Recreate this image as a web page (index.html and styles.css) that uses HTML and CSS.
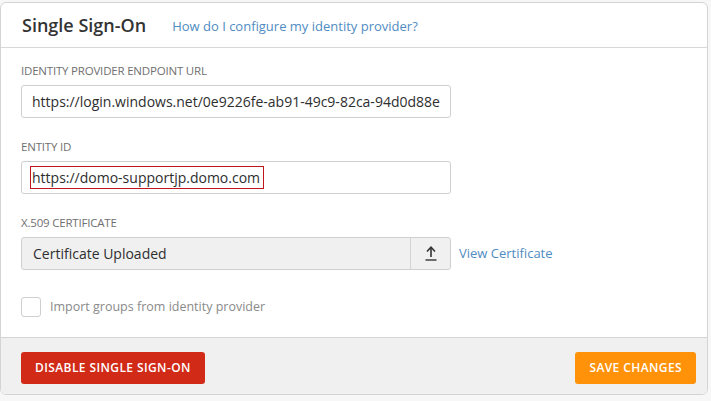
FILE: index.html
```html
<!DOCTYPE html>
<html lang="en">
	<head>
		<meta charset="UTF-8" />
		<meta name="viewport" content="width=device-width, initial-scale=1.0" />
		<title>Single Sign-On</title>
		<link rel="stylesheet" href="styles.css">
	</head>
	<body>
		<div class="card">
			<div class="card-header">
				<h2 class="title">Single Sign-On</h2>
				<a class="link help-link" href="#">How do I configure my identity provider?</a>
			</div>
			<div class="card-body">
				<div class="field">
					<label class="field-label">Identity Provider Endpoint URL</label>
					<div class="input">https://login.windows.net/0e9226fe-ab91-49c9-82ca-94d0d88e</div>
				</div>
				<div class="field">
					<label class="field-label">Entity ID</label>
					<div class="input"><span class="highlight">https://domo-supportjp.domo.com</span></div>
				</div>
				<div class="field">
					<label class="field-label">X.509 Certificate</label>
					<div class="cert-row">
						<div class="input input-file">
							<span class="file-name">Certificate Uploaded</span>
							<span class="upload-btn">
								<svg width="14" height="18" viewBox="0 0 14 18">
									<path d="M7 3.5 V13" stroke="#333" stroke-width="1.6" fill="none" />
									<path d="M3 7.5 L7 3.2 L11 7.5" stroke="#333" stroke-width="1.6" fill="none" />
									<path d="M1.5 16 H12.5" stroke="#333" stroke-width="1.4" fill="none" />
								</svg>
							</span>
						</div>
						<a class="link" href="#">View Certificate</a>
					</div>
				</div>
				<label class="check">
					<span class="check-box"></span>
					<span class="check-text">Import groups from identity provider</span>
				</label>
			</div>
			<div class="card-footer">
				<button class="btn btn-danger">Disable Single Sign-On</button>
				<button class="btn btn-warning">Save Changes</button>
			</div>
		</div>
	</body>
</html>
```

FILE: styles.css
```css
body {
	margin: 0;
	background: #f7f7f7;
	font-family: "Open Sans", "Liberation Sans", sans-serif;
	color: #333;
}
.card {
	margin-top: 2px;
	width: 706px;
	background: #fff;
	border: 1px solid #d4d4d4;
	border-radius: 6px;
	overflow: hidden;
}
.card-header {
	display: flex;
	align-items: center;
	gap: 26px;
	height: 44px;
	padding: 0 21px;
	border-bottom: 1px solid #d8d8d8;
}
.title {
	margin: 0;
	font-size: 18px;
	font-weight: 600;
	color: #333;
}
.link {
	color: #4f8cc2;
	text-decoration: none;
	font-size: 13px;
}
.help-link {
	margin-top: 1px;
}
.card-body {
	padding: 15px 20px 20px;
}
.field {
	margin-bottom: 21px;
}
.field-label {
	display: block;
	margin-bottom: 6px;
	font-size: 11.5px;
	line-height: 16px;
	letter-spacing: -0.2px;
	text-transform: uppercase;
	color: #707070;
}
.input {
	box-sizing: border-box;
	width: 430px;
	height: 33px;
	display: flex;
	align-items: center;
	padding: 0 10px;
	border: 1px solid #cfcfcf;
	border-radius: 3px;
	font-size: 14px;
	color: #2e2e2e;
	white-space: nowrap;
	overflow: hidden;
}
.highlight {
	margin-left: -2px;
	padding: 1px 3px 1px 1px;
	border: 1px solid #c0151b;
}
.cert-row {
	display: flex;
	align-items: center;
	gap: 8px;
}
.input-file {
	padding: 0 0 0 11px;
	background: #f0f0f0;
	justify-content: space-between;
	margin-top: -0.5px;
}
.upload-btn {
	width: 39px;
	height: 100%;
	display: flex;
	align-items: center;
	justify-content: center;
	border-left: 1px solid #d4d4d4;
}
.check {
	display: flex;
	align-items: center;
	gap: 9px;
	margin-top: 27px;
}
.check-box {
	box-sizing: border-box;
	width: 20px;
	height: 20px;
	border: 1px solid #cfcfcf;
	border-radius: 3px;
	background: #fff;
}
.check-text {
	font-size: 12.5px;
	color: #8a8a8a;
}
.card-footer {
	display: flex;
	justify-content: space-between;
	padding: 14px 11px 10px 20px;
	background: #f0f0f0;
	border-top: 1px solid #d4d4d4;
}
.btn {
	height: 32px;
	padding: 0 14px;
	border: 0;
	border-radius: 3px;
	font-family: inherit;
	font-size: 12px;
	font-weight: 600;
	letter-spacing: 0.4px;
	text-transform: uppercase;
	color: #fff;
}
.btn-danger {
	background: #d12a17;
}
.btn-warning {
	background: #ff9208;
}
```
